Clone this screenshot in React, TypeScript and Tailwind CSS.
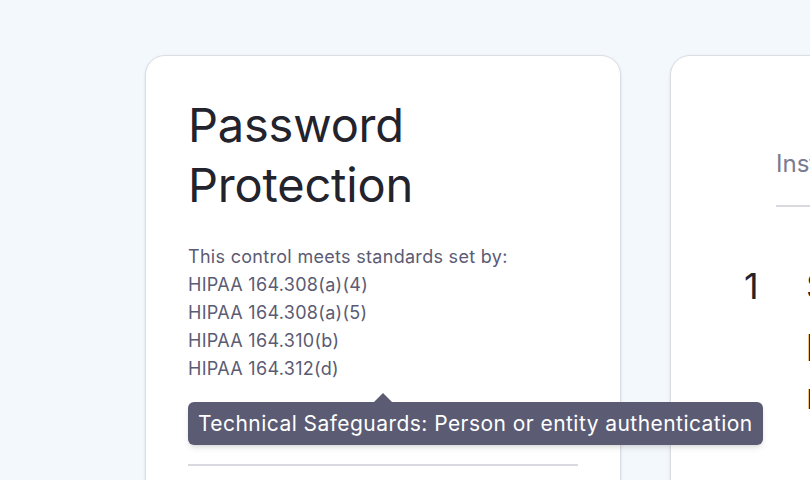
import React from "react";

const standards = [
  "HIPAA 164.308(a)(4)",
  "HIPAA 164.308(a)(5)",
  "HIPAA 164.310(b)",
  "HIPAA 164.312(d)",
];

export default function App() {
  return (
    <div
      className="h-[480px] w-[810px] overflow-hidden bg-[#f3f8fd] flex gap-[49px] pl-[145px] pt-[55px]"
      style={{ fontFamily: "Inter, 'Noto Sans', sans-serif" }}
    >
      {/* control card */}
      <div className="w-[476px] h-[470px] shrink-0 rounded-[20px] border border-[#dcdee4] bg-white shadow-sm px-[42px] pt-[39px]">
        <h1 className="text-[47px] leading-[60px] font-normal text-[#23232d] tracking-[-0.2px]">
          Password
          <br />
          Protection
        </h1>
        <div className="relative mt-[28px] text-[18px] leading-[28px] tracking-[0.3px] text-[#5b5b73]">
          <p>This control meets standards set by:</p>
          {standards.map((s) => (
            <p key={s}>{s}</p>
          ))}

          {/* tooltip on the last standard */}
          <div className="absolute left-0 top-[159px] z-10">
            <div className="absolute left-[186px] -top-[9px] w-0 h-0 border-l-[9px] border-r-[9px] border-b-[9px] border-l-transparent border-r-transparent border-b-[#5b5b73]" />
            <div className="whitespace-nowrap rounded-[6px] bg-[#5b5b73] px-[10px] h-[43px] flex items-center text-[21px] tracking-[0.45px] text-white shadow-md">
              Technical Safeguards: Person or entity authentication
            </div>
          </div>
        </div>
        <div className="mt-[81px] h-[2px] bg-[#d9d9df]" />
      </div>

      {/* instructions card */}
      <div className="w-[476px] h-[470px] shrink-0 rounded-[20px] border border-[#dcdee4] bg-white shadow-sm pl-[73px] pt-[88px]">
        <div className="ml-[32px]">
          <div className="text-[24px] leading-[40px] text-[#7a7a90]">Instructions</div>
          <div className="mt-[21px] h-[2px] bg-[#d9d9df]" />
        </div>
        <div className="mt-[52px] flex text-[36px] leading-[55px] text-[#23232d]">
          <span className="w-[62px] shrink-0">1</span>
          <span className="w-[300px]">Sign in to your password manager</span>
        </div>
      </div>
    </div>
  );
}
